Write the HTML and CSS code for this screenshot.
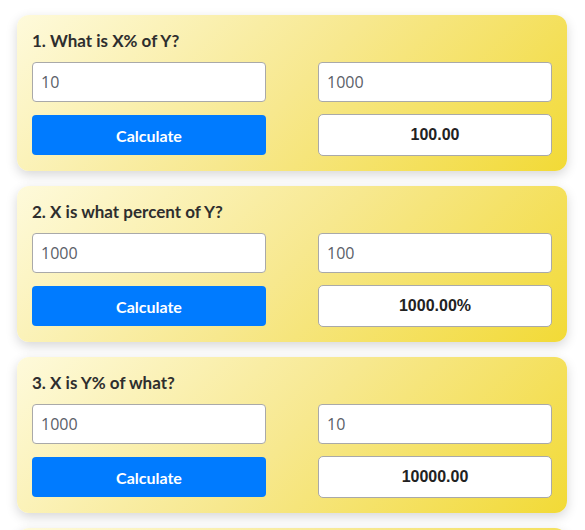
FILE: index.html
```html
<!DOCTYPE html>
<html lang="en">
<head>
  <meta charset="UTF-8">
  <title>Percentage Calculator</title>
  <link rel="stylesheet" href="styles.css">
</head>
<body>
  <div class="calc-list">
    <div class="calc-card">
      <h3>1. What is X% of Y?</h3>
      <div class="calc-grid">
        <input type="text" value="10">
        <input type="text" value="1000">
        <button class="calc-btn">Calculate</button>
        <div class="calc-result">100.00</div>
      </div>
    </div>

    <div class="calc-card">
      <h3>2. X is what percent of Y?</h3>
      <div class="calc-grid">
        <input type="text" value="1000">
        <input type="text" value="100">
        <button class="calc-btn">Calculate</button>
        <div class="calc-result">1000.00%</div>
      </div>
    </div>

    <div class="calc-card">
      <h3>3. X is Y% of what?</h3>
      <div class="calc-grid">
        <input type="text" value="1000">
        <input type="text" value="10">
        <button class="calc-btn">Calculate</button>
        <div class="calc-result">10000.00</div>
      </div>
    </div>

    <div class="calc-card">
      <h3>4. Percentage increase / decrease</h3>
      <div class="calc-grid">
        <input type="text" value="100">
        <input type="text" value="150">
        <button class="calc-btn">Calculate</button>
        <div class="calc-result">50.00%</div>
      </div>
    </div>
  </div>
</body>
</html>
```

FILE: styles.css
```css
body {
  margin: 0;
  background: #fff;
  font-family: "Lato", "Open Sans", sans-serif;
  color: #2b2b2b;
}

.calc-list {
  padding: 15px 18px 0 17px;
}

.calc-card {
  background: linear-gradient(135deg, #fefadb 0%, #f7e88e 50%, #f2da36 100%);
  border-radius: 12px;
  box-shadow: 0 4px 12px rgba(0, 0, 0, 0.16);
  padding: 15px;
  margin-bottom: 15px;
}

.calc-card h3 {
  margin: 0 0 10px;
  font-size: 17px;
  font-weight: 700;
  line-height: 22px;
  color: #2e2e2e;
}

.calc-grid {
  display: grid;
  grid-template-columns: 1fr 1fr;
  column-gap: 52px;
  row-gap: 12px;
  align-items: center;
}

.calc-grid input {
  box-sizing: border-box;
  height: 40px;
  width: 100%;
  border: 1px solid #a9a9a9;
  border-radius: 4px;
  padding: 0 8px;
  font-family: "Open Sans", "Noto Sans", sans-serif;
  font-size: 16px;
  color: #5a6068;
  background: #fff;
}

.calc-btn {
  height: 40px;
  border: none;
  border-radius: 4px;
  background: #007bff;
  color: #fff;
  font-family: "Lato", "Open Sans", sans-serif;
  font-size: 16px;
  font-weight: 700;
}

.calc-result {
  box-sizing: border-box;
  height: 42px;
  border: 1px solid #a9a9a9;
  border-radius: 5px;
  background: #fff;
  display: flex;
  align-items: center;
  justify-content: center;
  font-family: "Liberation Sans", Arial, sans-serif;
  font-weight: bold;
  font-size: 16px;
  color: #222;
}
```
